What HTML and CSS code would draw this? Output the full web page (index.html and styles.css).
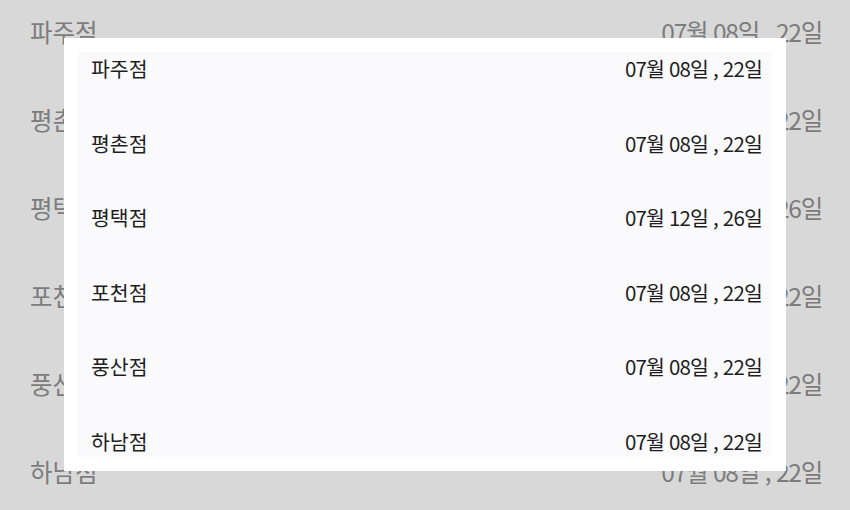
FILE: index.html
```html
<!DOCTYPE html>
<html lang="ko">
<head>
<meta charset="utf-8">
<link rel="stylesheet" href="styles.css">
</head>
<body>
<ul class="bg-list" aria-hidden="true">
  <li class="row"><span>파주점</span><span class="date">07월 08일 , 22일</span></li>
  <li class="row"><span>평촌점</span><span class="date">07월 08일 , 22일</span></li>
  <li class="row"><span>평택점</span><span class="date">07월 12일 , 26일</span></li>
  <li class="row"><span>포천점</span><span class="date">07월 08일 , 22일</span></li>
  <li class="row"><span>풍산점</span><span class="date">07월 08일 , 22일</span></li>
  <li class="row"><span>하남점</span><span class="date">07월 08일 , 22일</span></li>
</ul>
<div class="modal">
  <ul class="modal-list">
    <li class="mrow"><span>파주점</span><span class="date">07월 08일 , 22일</span></li>
    <li class="mrow"><span>평촌점</span><span class="date">07월 08일 , 22일</span></li>
    <li class="mrow"><span>평택점</span><span class="date">07월 12일 , 26일</span></li>
    <li class="mrow"><span>포천점</span><span class="date">07월 08일 , 22일</span></li>
    <li class="mrow"><span>풍산점</span><span class="date">07월 08일 , 22일</span></li>
    <li class="mrow"><span>하남점</span><span class="date">07월 08일 , 22일</span></li>
  </ul>
</div>
</body>
</html>
```
FILE: styles.css
```css
html, body {
  margin: 0;
  padding: 0;
}
body {
  width: 850px;
  height: 510px;
  overflow: hidden;
  background: #d8d8d8;
  font-family: "Noto Sans CJK KR", "Noto Sans", sans-serif;
  position: relative;
}
ul {
  list-style: none;
  margin: 0;
  padding: 0;
}
.bg-list {
  padding: 20px 28px 0 30px;
  display: flex;
  flex-direction: column;
  gap: 64px;
  color: #7c7c7c;
  font-size: 24.5px;
}
.row {
  display: flex;
  justify-content: space-between;
  line-height: 24px;
  height: 24px;
}
.date {
  letter-spacing: -0.05em;
}
.modal {
  position: absolute;
  left: 64px;
  top: 38px;
  width: 722px;
  height: 433px;
  background: #ffffff;
  padding: 14px;
  box-sizing: border-box;
}
.modal-list {
  height: 100%;
  background: #fafafc;
  padding: 4px 10px 0 13px;
  box-sizing: border-box;
  display: flex;
  flex-direction: column;
  gap: 50.6px;
  color: #1e1e1e;
  font-size: 20.5px;
  font-weight: 400;
}
.mrow {
  display: flex;
  justify-content: space-between;
  line-height: 24px;
  height: 24px;
}
.mrow .date {
  letter-spacing: -0.04em;
}
```
